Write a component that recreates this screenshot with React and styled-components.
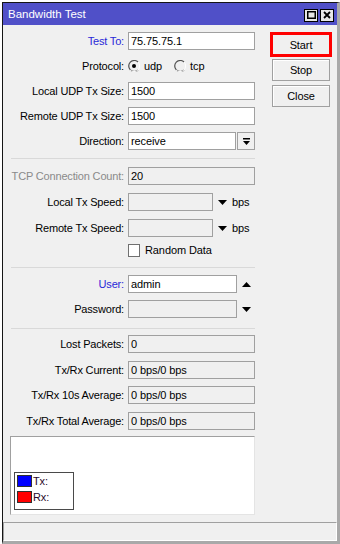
import React from "react";
import styled, { createGlobalStyle } from "styled-components";

const Global = createGlobalStyle`
  html, body { margin: 0; padding: 0; background: #ffffff; }
  body { font-family: "Liberation Sans", Arial, sans-serif; font-size: 11px; letter-spacing: -0.1px; }
  * { box-sizing: border-box; }
`;

const Screen = styled.div`
  width: 340px;
  height: 544px;
  padding: 2px 0 0 2px;
  background: #ffffff;
`;

const Window = styled.div`
  width: 338px;
  height: 542px;
  display: flex;
  flex-direction: column;
  background: #f0f0f0;
  border-left: 1px solid #151515;
  border-top: 1px solid #151515;
  border-right: 3px solid #a9a9a9;
  border-bottom: 3px solid #a9a9a9;
`;

const TitleBar = styled.div`
  height: 22px;
  background: #5050c8;
  display: flex;
  align-items: center;
  padding: 0 3px 0 5px;
  color: #ffffff;
  font-size: 11.5px;
  letter-spacing: 0;
`;

const TitleText = styled.span`
  flex: 1;
`;

const TitleButtons = styled.div`
  display: flex;
  gap: 2px;
  margin-top: 2px;
`;

const TitleButton = styled.div`
  width: 14px;
  height: 13px;
  background: #e8e8e8;
  border: 1px solid #000000;
  display: flex;
  align-items: center;
  justify-content: center;
`;

const Main = styled.div`
  display: flex;
`;

const Form = styled.div`
  width: 255px;
  padding: 7px 3px 0 8px;
  display: flex;
  flex-direction: column;
`;

const Section = styled.div`
  display: flex;
  flex-direction: column;
  gap: ${(p) => p.$gap || 7}px;
`;

const Separator = styled.div`
  height: 1px;
  background: #d9d9d9;
  margin: ${(p) => p.$top}px 0 ${(p) => p.$bottom}px 0;
`;

const Row = styled.div`
  display: grid;
  grid-template-columns: 113px 1fr;
  column-gap: 4px;
  height: ${(p) => p.$h || 18}px;
  align-items: center;
  margin-top: ${(p) => p.$mt || 0}px;
`;

const Label = styled.div`
  text-align: right;
  white-space: nowrap;
  letter-spacing: -0.17px;
  color: ${(p) => p.$color || "#000000"};
`;

const Field = styled.div`
  display: flex;
  align-items: center;
  height: 100%;
`;

const TextBox = styled.div`
  width: ${(p) => p.$w || 127}px;
  height: 18px;
  border: 1px solid #a0a0a0;
  background: ${(p) => (p.$ro ? "#f0f0f0" : "#ffffff")};
  padding: 0 2px;
  display: flex;
  align-items: center;
  white-space: nowrap;
  color: #000;
`;

const DropButton = styled.div`
  width: 18px;
  height: 18px;
  margin-left: 1px;
  border: 1px solid #a0a0a0;
  background: #f0f0f0;
  display: flex;
  align-items: center;
  justify-content: center;
`;

const Arrow = styled.svg`
  margin-left: 5px;
  flex: none;
`;

const Unit = styled.span`
  margin-left: 5px;
`;

const RadioGroup = styled.label`
  display: flex;
  align-items: center;
  margin-right: ${(p) => p.$mr || 0}px;
`;

const RadioText = styled.span`
  margin-left: 4px;
`;

const CheckBox = styled.div`
  width: 12px;
  height: 13px;
  background: #ffffff;
  border: 1px solid #707070;
`;

const CheckText = styled.span`
  margin-left: 5px;
`;

const Graph = styled.div`
  margin: 6.5px 0 0 -1px;
  width: 245px;
  height: 79px;
  background: #ffffff;
  border-top: 1px solid #a0a0a0;
  border-left: 1px solid #a0a0a0;
  border-right: 1px solid #e4e4e4;
  border-bottom: 1px solid #e4e4e4;
  display: flex;
  align-items: flex-end;
  padding: 0 0 4px 3px;
`;

const Legend = styled.div`
  width: 60px;
  height: 38px;
  border: 1px solid #4a4a4a;
  background: #ffffff;
  padding: 2px 2px;
  display: flex;
  flex-direction: column;
  gap: 4px;
`;

const LegendItem = styled.div`
  display: flex;
  align-items: center;
  height: 12px;
  color: #2a0a2a;
`;

const Swatch = styled.div`
  width: 15px;
  height: 12px;
  background: ${(p) => p.$color};
  border: 1px solid #303030;
  margin-right: 1px;
`;

const ButtonColumn = styled.div`
  margin-left: 12px;
  padding-top: 7px;
  width: 62px;
  display: flex;
  flex-direction: column;
  align-items: center;
`;

const Button = styled.div`
  width: ${(p) => (p.$focus ? 62 : 58)}px;
  height: ${(p) => (p.$focus ? 25 : 22)}px;
  border: ${(p) => (p.$focus ? "3px solid #ff0000" : "1px solid #a0a0a0")};
  box-shadow: ${(p) => (p.$focus ? "none" : "inset 1px 1px 0 #ffffff")};
  background: #f0f0f0;
  display: flex;
  align-items: center;
  justify-content: center;
  color: #000;
  margin-bottom: ${(p) => p.$mb || 0}px;
`;

const StatusBar = styled.div`
  margin-top: auto;
  height: 19px;
  border-top: 1px solid #a0a0a0;
  border-left: 1px solid #a0a0a0;
  border-right: 1px solid #ffffff;
  border-bottom: 1px solid #ffffff;
`;

function Radio({ checked }) {
  return (
    <svg width="12" height="12" viewBox="0 0 12 12">
      <circle cx="6" cy="6" r="5.5" fill="#f0f0f0" />
      <path d="M10 2 A5.5 5.5 0 1 0 10 10" fill="none" stroke="#505050" strokeWidth="1.2" />
      <path d="M2 10 A5.5 5.5 0 0 0 10 2" fill="none" stroke="#ffffff" strokeWidth="1" />
      {checked && <circle cx="6" cy="6" r="2" fill="#000000" />}
    </svg>
  );
}

const Down = () => (
  <Arrow width="9" height="5" viewBox="0 0 9 5">
    <polygon points="0,0 9,0 4.5,5" fill="#000" />
  </Arrow>
);

const Up = () => (
  <Arrow width="9" height="5" viewBox="0 0 9 5">
    <polygon points="0,5 9,5 4.5,0" fill="#000" />
  </Arrow>
);

function FieldRow({ label, color, children, h, mt }) {
  return (
    <Row $h={h} $mt={mt}>
      <Label $color={color}>{label}</Label>
      <Field>{children}</Field>
    </Row>
  );
}

export default function App() {
  return (
    <>
      <Global />
      <Screen>
        <Window>
          <TitleBar>
            <TitleText>Bandwidth Test</TitleText>
            <TitleButtons>
              <TitleButton>
                <svg width="9" height="8" viewBox="0 0 9 8">
                  <rect x="0.75" y="0.75" width="7.5" height="6.5" fill="none" stroke="#000" strokeWidth="1.5" />
                </svg>
              </TitleButton>
              <TitleButton>
                <svg width="8" height="8" viewBox="0 0 8 8">
                  <path d="M1 1 L7 7 M7 1 L1 7" stroke="#000" strokeWidth="1.8" />
                </svg>
              </TitleButton>
            </TitleButtons>
          </TitleBar>
          <Main>
            <Form>
              <Section>
                <FieldRow label="Test To:" color="#2828d8">
                  <TextBox>75.75.75.1</TextBox>
                </FieldRow>
                <FieldRow label="Protocol:">
                  <RadioGroup $mr={12}>
                    <Radio checked />
                    <RadioText>udp</RadioText>
                  </RadioGroup>
                  <RadioGroup>
                    <Radio />
                    <RadioText>tcp</RadioText>
                  </RadioGroup>
                </FieldRow>
                <FieldRow label="Local UDP Tx Size:">
                  <TextBox>1500</TextBox>
                </FieldRow>
                <FieldRow label="Remote UDP Tx Size:">
                  <TextBox>1500</TextBox>
                </FieldRow>
                <FieldRow label="Direction:">
                  <TextBox $w={108}>receive</TextBox>
                  <DropButton>
                    <svg width="9" height="9" viewBox="0 0 9 9">
                      <rect x="1" y="1" width="7" height="1.5" fill="#000" />
                      <polygon points="1,4 8,4 4.5,8" fill="#000" />
                    </svg>
                  </DropButton>
                </FieldRow>
              </Section>
              <Separator $top={8} $bottom={8} />
              <Section $gap={8}>
                <FieldRow label="TCP Connection Count:" color="#8a8a8a">
                  <TextBox $ro>20</TextBox>
                </FieldRow>
                <FieldRow label="Local Tx Speed:">
                  <TextBox $ro $w={85} />
                  <Down />
                  <Unit>bps</Unit>
                </FieldRow>
                <FieldRow label="Remote Tx Speed:">
                  <TextBox $ro $w={85} />
                  <Down />
                  <Unit>bps</Unit>
                </FieldRow>
              </Section>
              <FieldRow label="" h={14} mt={6}>
                <CheckBox />
                <CheckText>Random Data</CheckText>
              </FieldRow>
              <Separator $top={10} $bottom={7} />
              <Section>
                <FieldRow label="User:" color="#2828d8">
                  <TextBox $w={109}>admin</TextBox>
                  <Up />
                </FieldRow>
                <FieldRow label="Password:">
                  <TextBox $ro $w={109} />
                  <Down />
                </FieldRow>
              </Section>
              <Separator $top={10} $bottom={6} />
              <Section $gap={7.5}>
                <FieldRow label="Lost Packets:">
                  <TextBox $ro>0</TextBox>
                </FieldRow>
                <FieldRow label="Tx/Rx Current:">
                  <TextBox $ro>0 bps/0 bps</TextBox>
                </FieldRow>
                <FieldRow label="Tx/Rx 10s Average:">
                  <TextBox $ro>0 bps/0 bps</TextBox>
                </FieldRow>
                <FieldRow label="Tx/Rx Total Average:">
                  <TextBox $ro>0 bps/0 bps</TextBox>
                </FieldRow>
              </Section>
              <Graph>
                <Legend>
                  <LegendItem>
                    <Swatch $color="#0000ff" />
                    Tx:
                  </LegendItem>
                  <LegendItem>
                    <Swatch $color="#ff0000" />
                    Rx:
                  </LegendItem>
                </Legend>
              </Graph>
            </Form>
            <ButtonColumn>
              <Button $focus $mb={2}>Start</Button>
              <Button $mb={4}>Stop</Button>
              <Button>Close</Button>
            </ButtonColumn>
          </Main>
          <StatusBar />
        </Window>
      </Screen>
    </>
  );
}
